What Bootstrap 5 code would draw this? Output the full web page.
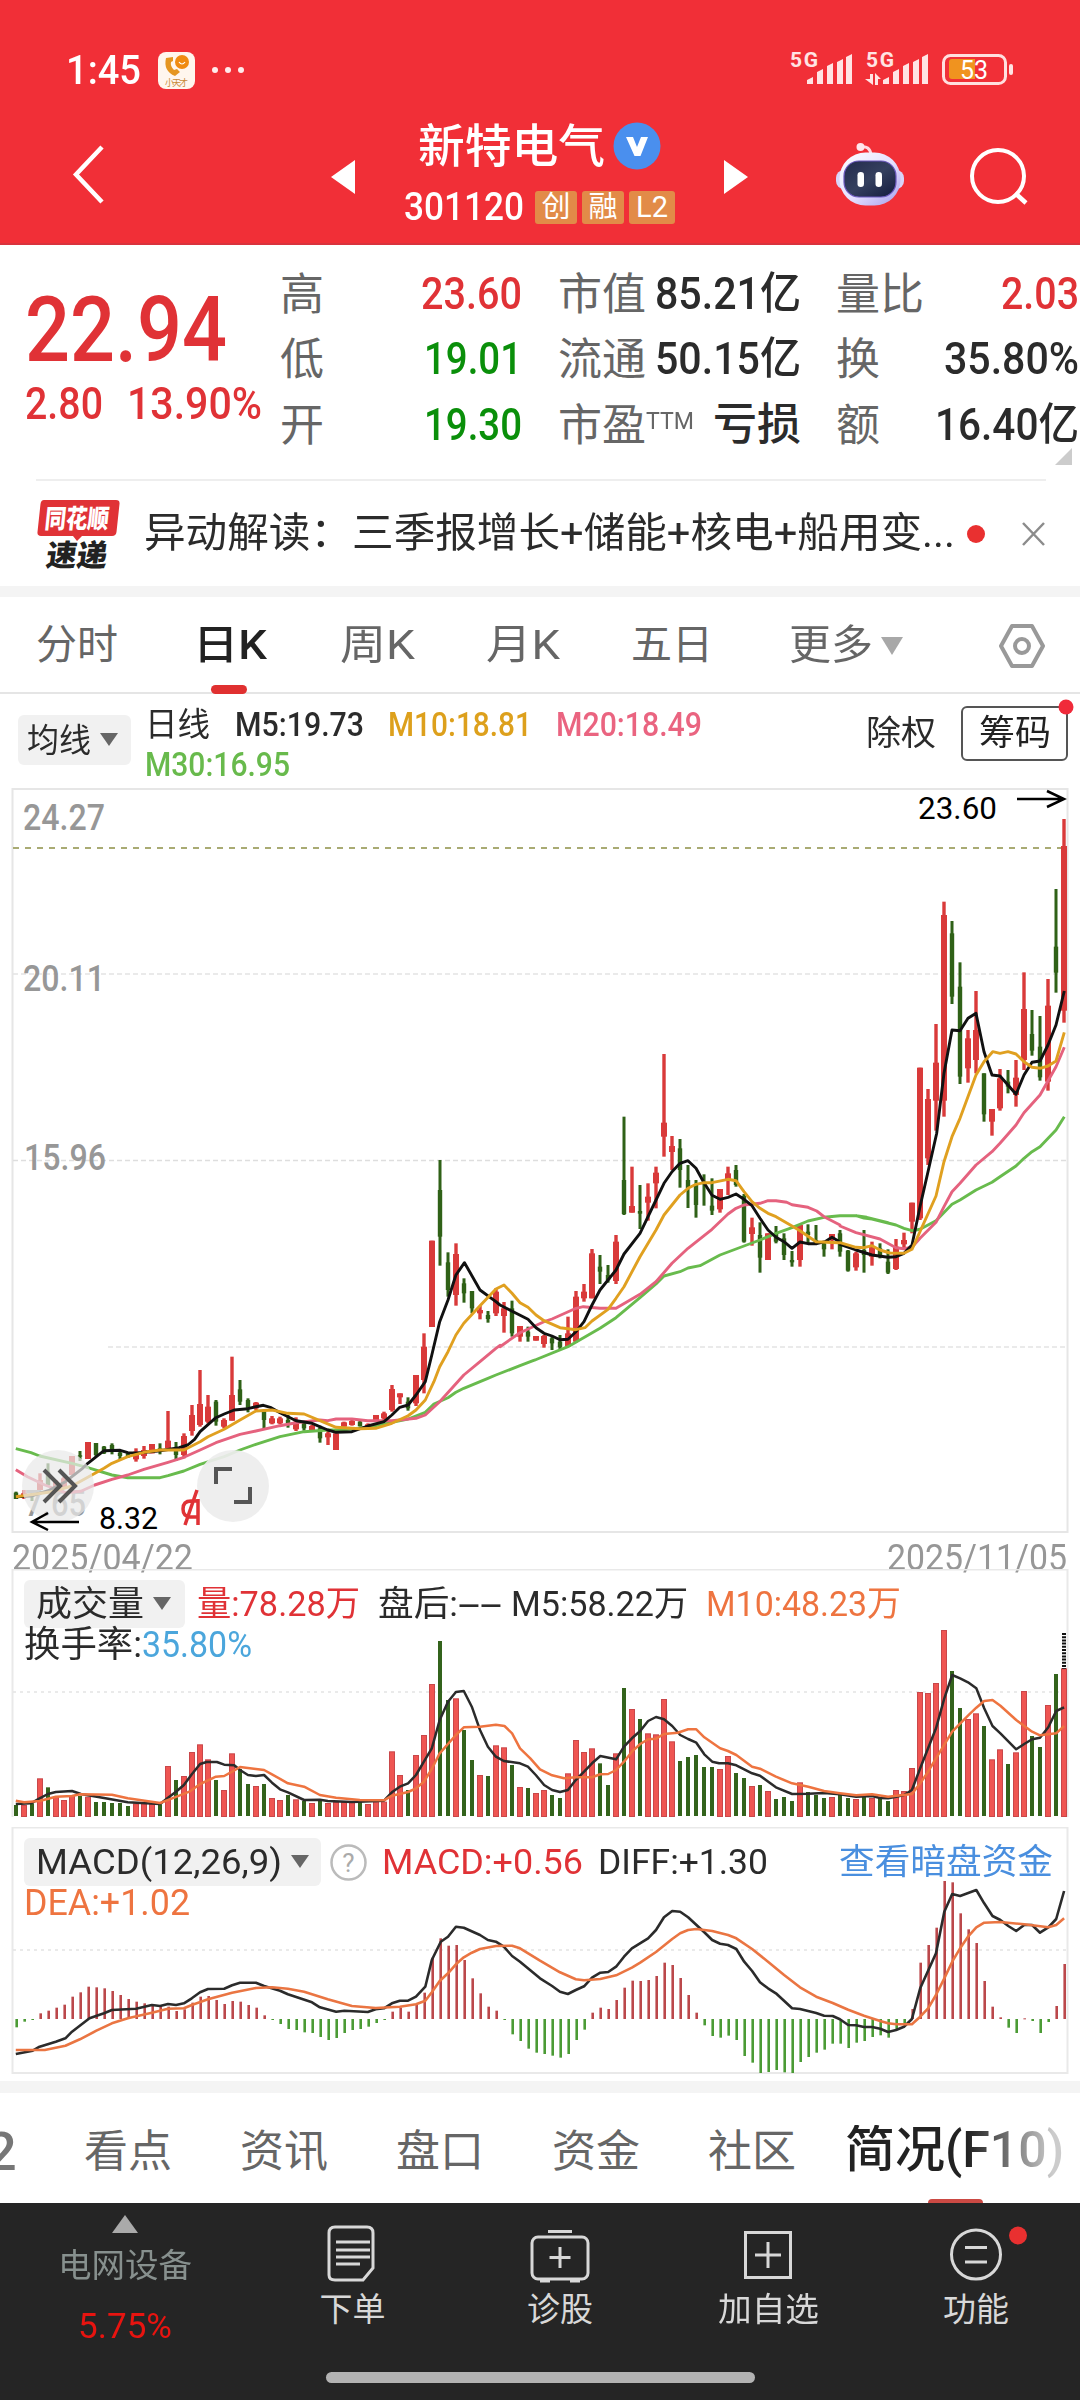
<!DOCTYPE html>
<html lang="zh-CN">
<head>
<meta charset="utf-8">
<meta name="viewport" content="width=device-width, initial-scale=1">
<title>新特电气 301120</title>
<link href="https://cdn.jsdelivr.net/npm/bootstrap@5.3.0/dist/css/bootstrap.min.css" rel="stylesheet">
<style>
body{width:1080px;height:2400px;overflow:hidden;background:#fff;color:#2b2b2b;font-family:Roboto,"Noto Sans CJK SC",sans-serif;line-height:1}
svg{display:block}
svg text{font-family:Roboto,"Noto Sans CJK SC",sans-serif}
.fit{display:inline-block;white-space:nowrap;text-align:left}
.fit>span{display:inline-block;transform-origin:0 50%}
.up{color:#e03236}.down{color:#0a8f0a}.soft{color:#666}.org{color:#ee7440}
.num{font-weight:500}
/* header */
.top-area{height:245px;background:#f12f37;color:#fff;border-bottom:2px solid #d9333d}
.status-row{height:106px;padding:34px 64px 0 66px}
.status-row .clock{font-size:41px;font-weight:500}
.title-row{height:137px}
.title-row .back{margin-left:70px}
.prev{margin-left:196px}
.title-mid{width:290px}
.stock-name{font-size:46px;font-weight:500;margin-left:-2px}
.stock-code{font-size:39px;font-weight:500}
.code-row{margin-top:18px}
.stock-tag{height:33px;background:#e28b48;border-radius:3px;font-size:29px;width:42px;margin-left:5px}
.tag-first{margin-left:11px}
.tag-l2{width:46px}
/* quote */
.quote{height:234px;padding-left:25px}
.quote-main{width:255px;padding-top:40px}
.big{font-size:91px;font-weight:500}
.sub{font-size:44px;font-weight:500;margin-top:6px}
.qrow{height:65.5px}
.qcols{padding-top:17px;font-size:44px}
.qa{width:242px}.qb{width:243px;margin-left:36px}.qc{width:243px;margin-left:35px}
.qcols .num{margin-top:-2px}
.fold{right:8px;bottom:14px}
/* news */
.news{height:107px;margin:0 34px 0 36px;border-top:2px solid #eee}
.news-text{font-size:41px;margin-left:24px}
.news-dot{margin-left:12px}
.band{background:#f4f4f4}
.band-a{height:11px}.band-b{height:12px}
.reddot{width:18px;height:18px;border-radius:50%;background:#e93030}
/* periods */
.periods{height:97px;padding:2px 0 0 36px;border-bottom:2px solid #e5e5e5;display:grid;grid-template-columns:157px 147px 146px 145px 158px 210px auto;font-size:41px;color:#666;align-items:center}
.periods .now{color:#222;font-weight:500;position:relative}
.periods .now::after{content:"";position:absolute;left:18px;top:60px;width:36px;height:9px;border-radius:5px;background:#e03030}
.averages{height:94px;padding:0 12px 0 18px}
.chip{background:#f1f1f1;border-radius:6px}
.avg-chip{width:113px;height:50px;padding-left:9px;font-size:33px;margin-top:21px}
.avg-list{width:560px;margin-left:14px;font-size:33px;padding-top:10px}
.avg-list div{height:40px}
.gap-m{margin-left:25px}
.m10{color:#dda01c}.m20{color:#ea6480}.m30{color:#68ba4c}
.chips-btn{width:107px;height:55px;border:2px solid #555;border-radius:6px;font-size:35px;color:#222}
.adj{font-size:34px;margin-right:25px}
.btn-dot{right:-6px;top:5px}
.price-panel{height:746px}
.dates{height:35px;padding:6px 13px 0 12px;font-size:36px;color:#979797}
.vol-panel{height:258px}
.macd-panel{height:254px}
.panel-head{padding:11px 27px 0 24px;position:relative;font-size:35px}
.panel-head .chip{height:48px;padding-left:12px}
.chip-vol{width:161px}.chip-macd{width:297px}
.line2{position:relative;padding-left:24px;font-size:36px;margin-top:-1px}
.link-blue{color:#4a8fdf}
.sky{color:#4ba6dc}
.g9{margin-left:9px}.g12{margin-left:12px}.g15{margin-left:15px}.g18{margin-left:18px}
/* lower tabs */
.lower{height:110px;font-size:44px;color:#666;display:grid;grid-template-columns:84px 156px 156px 156px 156px 137px auto;align-items:center;padding-top:8px}
.lower .now{font-size:50px;font-weight:500;padding-bottom:4px;background:linear-gradient(90deg,#222 0,#222 56%,#ccc 95%);-webkit-background-clip:text;background-clip:text;color:transparent}
.lower-line{width:55px;height:4px;background:#cc4a44;border-radius:4px 4px 0 0;left:928px;bottom:0}
.dock{height:197px;background:#252525;color:#d8d8d8;font-size:33px}
.dock-cols{height:150px;display:grid;grid-template-columns:249px 207px 208px 208px 208px}
.dock-item{padding-top:20px}
.dock-item .fit{margin-top:8px}
.sector{color:#87908e;margin-top:12px}
.sector-chg{color:#e81410;margin-top:27px;font-size:35px}
.home-bar{width:429px;height:11px;border-radius:6px;background:#b3b3b3;margin-left:326px;margin-top:19px}
</style>
<script src="https://cdn.jsdelivr.net/npm/bootstrap@5.3.0/dist/js/bootstrap.bundle.min.js"></script>
</head>
<body>
<header class="top-area">
  <div class="status-row d-flex align-items-start">
    <span class="clock mt-3 fit" data-w="75">1:45</span>
    <svg class="ms-3 mt-3" width="96" height="42" viewBox="0 0 96 42"><rect x="1" y="2" width="37" height="37" rx="8" fill="#fff6ee"/><path d="M9 8q-3 13 9 18l5-4-3-3-3 1q-4-4-3-8l2-1v-4z" fill="#e59520"/><circle cx="25" cy="12" r="7" fill="#f08b12"/><path d="M22 12q3 4 6 0" fill="none" stroke="#fff" stroke-width="1.2"/><text x="8" y="36" font-size="9" textLength="23" fill="#c88a3a">小天才</text><g fill="#ffecec"><circle cx="58" cy="20" r="3"/><circle cx="71" cy="20" r="3"/><circle cx="84" cy="20" r="3"/></g></svg>
    <svg class="ms-auto" width="228" height="56" viewBox="788 34 228 56"><g fill="#ffe4e4"><text x="790" y="67" font-size="21" font-weight="700" textLength="28">5G</text><text x="866" y="67" font-size="21" font-weight="700" textLength="28">5G</text>
      <path d="M807 84v-4l6-3v7zM817 84v-12l6-3v15zM827 84v-18l6-3v21zM837 84v-22l6-3v25zM846 84v-27l6-3v30z"/><path d="M883 84v-4l6-3v7zM893 84v-12l6-3v15zM903 84v-18l6-3v21zM913 84v-22l6-3v25zM922 84v-27l6-3v30z"/><path d="M870 74h3v11l-8-6h5zM875 85V73l6 6h-3v6z"/><rect x="1009" y="64" width="4" height="11" rx="2"/></g>
      <rect x="943.500" y="55.500" width="62" height="28" rx="7" fill="none" stroke="#ffe0df" stroke-width="3"/><path d="M952 59h23v20h-23q-3 0-3-3V62q0-3 3-3z" fill="#f0931f"/><text x="960" y="79" font-size="25" textLength="28" fill="#fff">53</text></svg>
  </div>
  <div class="title-row d-flex">
    <svg class="back" width="40" height="137" viewBox="70 106 40 137"><path d="M102 147 76 174.500 102 202" fill="none" stroke="#fff" stroke-width="4.500"/></svg>
    <svg class="prev" width="50" height="137" viewBox="110 106 50 137"><path d="M159 160v34l-24-17z" fill="#fff"/></svg>
    <div class="title-mid ms-5">
      <div class="d-flex align-items-center pt-3 ps-3"><span class="stock-name fit" data-w="187">新特电气</span><svg class="ms-2" width="48" height="48" viewBox="0 0 48 48"><circle cx="24" cy="24" r="23.500" fill="#4a8fee"/><path d="M13 15h7l4 10 4-10h7L27.500 34h-6z" fill="#fff"/></svg></div>
      <div class="code-row d-flex align-items-center"><span class="stock-code fit" data-w="120">301120</span><span class="stock-tag tag-first d-flex justify-content-center align-items-center">创</span><span class="stock-tag d-flex justify-content-center align-items-center">融</span><span class="stock-tag tag-l2 d-flex justify-content-center align-items-center">L2</span></div>
    </div>
    <svg class="ms-auto" width="356" height="137" viewBox="724 106 356 137">
      <defs><linearGradient id="rb" x1="0" y1="0" x2="1" y2="1"><stop offset="0" stop-color="#fff"/><stop offset=".55" stop-color="#e4dfff"/><stop offset="1" stop-color="#a39bea"/></linearGradient><linearGradient id="fc" x1="0" y1="0" x2="1" y2="1"><stop offset="0" stop-color="#232a4c"/><stop offset=".5" stop-color="#35405f"/><stop offset="1" stop-color="#131a3d"/></linearGradient></defs>
      <path d="M724 160v34l24-17z" fill="#fff"/>
      <path d="M860 147q10-2 11 8" fill="none" stroke="#ffd9e3" stroke-width="3"/><circle cx="860.500" cy="147" r="4" fill="#ffe6ec"/>
      <rect x="836" y="170" width="68" height="19" rx="8" fill="#d9d4f8"/><rect x="839.500" y="152.500" width="61" height="53" rx="26" fill="url(#rb)"/><rect x="844" y="161" width="52" height="36" rx="15" fill="url(#fc)" stroke="#6a57bd" stroke-width="1.200"/><rect x="857.500" y="172" width="6.500" height="15" rx="3.200" fill="#fff"/><rect x="875.500" y="172" width="6.500" height="15" rx="3.200" fill="#fff"/>
      <circle cx="998" cy="176" r="26" fill="none" stroke="#fff" stroke-width="4"/><path d="m1015 193 11 10" stroke="#fff" stroke-width="4.500"/>
    </svg>
  </div>
</header>

<section class="quote d-flex position-relative">
  <div class="quote-main up"><div class="big"><span class="fit" data-w="202">22.94</span></div><div class="sub"><span class="fit" data-w="78">2.80</span><span class="fit ms-4" data-w="135">13.90%</span></div></div>
  <div class="qcols d-flex">
    <div class="qa">
      <div class="qrow d-flex align-items-center justify-content-between"><span class="soft">高</span><span class="num up fit" data-w="101">23.60</span></div>
      <div class="qrow d-flex align-items-center justify-content-between"><span class="soft">低</span><span class="num down fit" data-w="98">19.01</span></div>
      <div class="qrow d-flex align-items-center justify-content-between"><span class="soft">开</span><span class="num down fit" data-w="98">19.30</span></div>
    </div>
    <div class="qb">
      <div class="qrow d-flex align-items-center justify-content-between"><span class="soft">市值</span><span class="num fit" data-w="146">85.21亿</span></div>
      <div class="qrow d-flex align-items-center justify-content-between"><span class="soft">流通</span><span class="num fit" data-w="146">50.15亿</span></div>
      <div class="qrow d-flex align-items-center justify-content-between"><span class="soft">市盈<sup class="fs-4"><span class="fit" data-w="48">TTM</span></sup></span><span class="num fit" data-w="88">亏损</span></div>
    </div>
    <div class="qc">
      <div class="qrow d-flex align-items-center justify-content-between"><span class="soft">量比</span><span class="num up fit" data-w="78">2.03</span></div>
      <div class="qrow d-flex align-items-center justify-content-between"><span class="soft">换</span><span class="num fit" data-w="135">35.80%</span></div>
      <div class="qrow d-flex align-items-center justify-content-between"><span class="soft">额</span><span class="num fit" data-w="144">16.40亿</span></div>
    </div>
  </div>
  <svg class="position-absolute fold" width="17" height="17"><path d="M17 0v17H0z" fill="#ccc"/></svg>
</section>

<section class="news d-flex align-items-center">
  <svg width="84" height="76" viewBox="36 494 84 76"><path d="M44 498h72q4 0 3.500 4l-3 28q-.5 4-4.500 4H82l-5 5-4-5H41q-4 0-3.500-4l3-28q.5-4 3.500-4z" fill="#e03236"/><text transform="translate(44 526) skewX(-6)" font-size="26" font-weight="900" textLength="64" lengthAdjust="spacingAndGlyphs" fill="#fff">同花顺</text><text transform="translate(45 564) skewX(-8)" font-size="30" font-weight="900" textLength="61" lengthAdjust="spacingAndGlyphs" fill="#222">速递</text></svg>
  <span class="news-text fit" data-w="811">异动解读：三季报增长+储能+核电+船用变...</span>
  <span class="reddot news-dot flex-shrink-0"></span>
  <svg class="ms-auto" width="25" height="26" viewBox="0 0 25 26"><path d="m2 2 21 22M23 2 2 24" stroke="#8c8c8c" stroke-width="2.500"/></svg>
</section>
<div class="band band-a"></div>

<nav class="periods">
  <span class="fit" data-w="82">分时</span><span class="now"><span class="fit" data-w="74">日K</span></span><span class="fit" data-w="75">周K</span><span class="fit" data-w="74">月K</span><span class="fit" data-w="82">五日</span>
  <span class="d-flex align-items-center"><span class="fit" data-w="84">更多</span><svg class="ms-2" width="22" height="18"><path d="M0 0h22L11 18z" fill="#a8a8a8"/></svg></span>
  <svg width="46" height="46" viewBox="0 0 46 46"><path d="M13 3h20l11 20-11 20H13L2 23z" fill="none" stroke="#999" stroke-width="4" stroke-linejoin="round"/><circle cx="23" cy="23" r="7" fill="none" stroke="#999" stroke-width="4"/></svg>
</nav>

<section class="averages d-flex">
  <div class="avg-chip chip d-flex align-items-center"><span class="fit" data-w="64">均线</span><svg class="ms-2" width="20" height="14"><path d="M1 0h18l-9 13z" fill="#666"/></svg></div>
  <div class="avg-list">
    <div class="d-flex align-items-center"><span class="fit" data-w="65">日线</span><span class="fit num gap-m" data-w="129">M5:19.73</span><span class="fit num m10 ms-4" data-w="144">M10:18.81</span><span class="fit num m20 ms-4" data-w="146">M20:18.49</span></div>
    <div class="d-flex align-items-center"><span class="fit num m30" data-w="145">M30:16.95</span></div>
  </div>
  <div class="ms-auto d-flex align-items-center position-relative mb-3 pb-0"><span class="adj"><span class="fit" data-w="70">除权</span></span><span class="chips-btn d-flex align-items-center justify-content-center"><span class="fit" data-w="72">筹码</span></span><svg class="position-absolute btn-dot" width="16" height="16"><circle cx="8" cy="8" r="7.500" fill="#f02a3a"/></svg></div>
</section>

<section class="price-panel"><svg id="price" width="1080" height="746" viewBox="0 788 1080 746"></svg></section>
<div class="dates d-flex justify-content-between align-items-start"><span class="fit" data-w="181">2025/04/22</span><span class="fit" data-w="180">2025/11/05</span></div>

<section class="vol-panel position-relative">
  <svg id="volume" class="position-absolute top-0 start-0" width="1080" height="258" viewBox="0 1569 1080 258"></svg>
  <div class="panel-head d-flex align-items-center">
    <span class="chip chip-vol d-flex align-items-center"><span class="fit" data-w="108">成交量</span><svg class="ms-2" width="20" height="14"><path d="M1 0h18l-9 13z" fill="#666"/></svg></span>
    <span class="fit up g12" data-w="163">量:78.28万</span><span class="fit g18" data-w="80">盘后:</span><span class="fit" data-w="44">--</span><span class="fit g9" data-w="177">M5:58.22万</span><span class="fit org g18" data-w="195">M10:48.23万</span>
  </div>
  <div class="line2"><span class="fit" data-w="118">换手率:</span><span class="fit sky" data-w="110">35.80%</span></div>
</section>

<section class="macd-panel position-relative">
  <svg id="macd" class="position-absolute top-0 start-0" width="1080" height="254" viewBox="0 1827 1080 254"></svg>
  <div class="panel-head d-flex align-items-center">
    <span class="chip chip-macd d-flex align-items-center"><span class="fit" data-w="246">MACD(12,26,9)</span><svg class="ms-2" width="20" height="14"><path d="M1 0h18l-9 13z" fill="#666"/></svg></span>
    <svg class="g9" width="37" height="37" viewBox="0 0 37 37"><circle cx="18.500" cy="18.500" r="17" fill="none" stroke="#bbb" stroke-width="2.500"/><text x="18.500" y="27.500" font-size="26" text-anchor="middle" fill="#aaa">?</text></svg>
    <span class="fit up g15" data-w="201">MACD:+0.56</span><span class="fit g15" data-w="170">DIFF:+1.30</span><span class="fit link-blue ms-auto" data-w="214">查看暗盘资金</span>
  </div>
  <div class="line2 org"><span class="fit" data-w="166">DEA:+1.02</span></div>
</section>
<div class="band band-b"></div>

<nav class="lower position-relative">
  <svg width="40" height="60" viewBox="0 0 40 60"><text x="-14" y="48" font-size="54" font-weight="500" fill="#777">2</text></svg><span>看点</span><span>资讯</span><span>盘口</span><span>资金</span><span>社区</span><span><span class="now d-inline-block">简况(F10)</span></span>
  <i class="lower-line position-absolute"></i>
</nav>

<footer class="dock">
  <div class="dock-cols">
    <div class="d-flex flex-column align-items-center pt-2"><svg width="28" height="22" class="mt-1"><path d="M14 0 27 18H1z" fill="#aaa"/></svg><span class="fit sector" data-w="134">电网设备</span><span class="fit sector-chg" data-w="94">5.75%</span></div>
    <div class="dock-item d-flex flex-column align-items-center"><svg width="60" height="62" viewBox="0 0 60 62"><path d="M11 4h32q6 0 6 6v35L39 57H11q-6 0-6-5V10q0-6 6-6z" transform="translate(1)" fill="none" stroke="#d8d8d8" stroke-width="3"/><path d="M13 19h34M13 27h34M13 34h34M13 41h24" stroke="#d8d8d8" stroke-width="3"/></svg><span class="fit" data-w="66">下单</span></div>
    <div class="dock-item d-flex flex-column align-items-center"><svg width="60" height="62" viewBox="0 0 60 62"><rect x="2" y="14" width="56" height="42" rx="6" fill="none" stroke="#d8d8d8" stroke-width="3"/><path d="M18 8.500h24M30 24v21M19.500 34.500h21M10 58h10M40 58h10" stroke="#d8d8d8" stroke-width="3"/></svg><span class="fit" data-w="66">诊股</span></div>
    <div class="dock-item d-flex flex-column align-items-center"><svg width="60" height="62" viewBox="0 0 60 62"><rect x="7.500" y="9.500" width="45" height="45" fill="none" stroke="#d8d8d8" stroke-width="3"/><path d="M30 19v26M17 32h26" stroke="#d8d8d8" stroke-width="3"/></svg><span class="fit" data-w="101">加自选</span></div>
    <div class="dock-item d-flex flex-column align-items-center"><svg width="60" height="62" viewBox="0 0 60 62" overflow="visible"><circle cx="30" cy="31.500" r="24.500" fill="none" stroke="#d8d8d8" stroke-width="3"/><path d="M19 24.500h22M19 39h22" stroke="#d8d8d8" stroke-width="3"/><circle cx="72" cy="12.500" r="9" fill="#e93030"/></svg><span class="fit" data-w="66">功能</span></div>
  </div>
  <div class="home-bar"></div>
</footer>

<script>
/* squeeze each label horizontally to its column width */
document.querySelectorAll('.fit').forEach(function(e){
  var w=+e.dataset.w,s=document.createElement('span');
  s.textContent=e.textContent;e.textContent='';e.appendChild(s);
  var n=s.getBoundingClientRect().width;
  e.style.width=w+'px';s.style.transform='scaleX('+(w/n)+')';
});
var RED='#d93a3a',GREEN='#2f6117';
function X(i){return 16+8*i}
function rect(x,y,w,h,f,o){return '<rect x="'+x+'" y="'+y+'" width="'+w+'" height="'+Math.max(h,1)+'" fill="'+f+'"'+(o||'')+'/>'}
function hline(y,c,d,w){return '<path d="M13 '+y+'H1067" stroke="'+c+'" stroke-width="'+(w||1.5)+'" stroke-dasharray="'+d+'"/>'}
/* segs: [originX, originY, scaleX, "x,y x,y ..."] */
function curve(c,w,segs){
  var p=[];segs.forEach(function(s){s[3].trim().split(/\s+/).forEach(function(q){q=q.split(',');p.push((s[0]+q[0]/s[2]).toFixed(1)+','+(s[1]+q[1]/3).toFixed(1))})});
  return '<polyline points="'+p.join(' ')+'" fill="none" stroke="'+c+'" stroke-width="'+w+'" stroke-linejoin="round"/>';
}
function label(x,y,s,w,size,c,b){return '<text x="'+x+'" y="'+y+'" font-size="'+size+'" font-weight="'+(b||400)+'" textLength="'+w+'" lengthAdjust="spacingAndGlyphs" fill="'+c+'">'+s+'</text>'}
var K=2.904;
/* colour, high, body top, body bottom, low */
var A='g1175 1178 1197 1197|r1170 1180 1192 1197|g1180 1183 1190 1203|r1120 1140 1170 1170|g1090 1115 1155 1160|r1140 1145 1165 1168|r1130 1135 1160 1165|r1068 1068 1125 1125|g1053 1066 1070 1083|r1026 1026 1077 1077|g1029 1029 1065 1070|g1038 1040 1060 1062|g1030 1035 1055 1063|g1055 1058 1068 1080|g1058 1060 1070 1074|r1045 1055 1078 1085|r1038 1050 1068 1076|r1032 1032 1060 1060|g1030 1045 1052 1063|r933 1022 1045 1045|g1026 1045 1065 1083|r1000 1008 1065 1075|r915 945 993 1007|r810 912 975 980|r885 920 965 970|g900 905 965 977|r955 960 980 985|r770 885 962 962|g840 868 905 915|g895 900 925 937|r906 908 925 930|g930 935 960 987|r948 955 970 973|r950 955 970 973|g945 960 970 983|r952 965 988 993|g962 970 985 992|r975 978 990 992|g977 985 1015 1028|r990 1000 1012 1035|r1000 1000 1050 1050|r965 967 980 980|r960 963 975 977|g962 965 978 980|r970 973 982 982|r945 945 963 963|r935 940 955 960|r855 867 930 935|r880 880 892 912|g892 905 925 932|r825 825 910 918|r700 740 840 880|r422 422 681 681|g180 270 410 497|g457 487 570 590|r430 462 585 617|g535 550 580 608|g573 573 625 640|r618 630 640 658|g633 645 657 668|r565 575 640 648|r606 625 648 698';
var B='g1022 1045 1120 1130|r1098 1098 1130 1145|g1100 1115 1130 1145|r1128 1128 1142 1142|r1125 1128 1152 1163|g1130 1135 1150 1170|g1125 1145 1162 1168|r1070 1120 1160 1160|r993 1010 1145 1148|r972 995 1015 1025|r867 880 1015 1015|g885 920 935 972|g915 945 960 968|r825 845 963 972|g470 660 762 765|r620 738 758 758|g675 753 761 807|r670 710 728 782|r620 638 670 745|r282 488 530 590|r528 558 576 630|g537 565 630 683|g615 660 685 744|g660 675 735 773|g643 665 673 737|g655 737 752 765|r687 687 748 758|r620 640 662 705|g615 630 675 680|g702 708 845 848|r773 802 822 857|g787 825 893 938|r820 820 900 900|g798 820 845 850|g820 835 885 900|g873 900 907 920|r795 795 900 920|g793 815 825 850|g795 840 848 850|g845 850 868 890|r822 822 838 868|g810 820 875 890|g870 872 932 935|r875 880 922 932|g810 870 885 938|r845 860 890 917|g850 865 890 895|g868 905 938 942';
var C='r1377 1400 1467 1470|r1358 1380 1393 1410|r1268 1268 1325 1360|r863 863 1315 1320|r927 957 1135 1155|r732 848 962 1052|r365 405 962 1010|g423 460 650 672|g547 620 890 912|r750 775 865 908|r633 750 840 880|g880 880 1003 1025|r987 987 1025 1067|r867 895 985 992|g870 905 920 940|r840 893 945 980|r577 687 840 870|g690 762 812 827|g708 800 892 902|r597 677 905 932|g327 500 578 638|r117 198 692 728';
var candles=[];
[[A,1100],[B,960],[C,780]].forEach(function(s){s[0].split('|').forEach(function(q){var v=q.slice(1).split(' ').map(function(n){return s[1]+n/3});v.unshift(q[0]);candles.push(v)})});
var h='<rect x="12.500" y="789" width="1055" height="743" fill="none" stroke="#e6e6e6" stroke-width="2"/>'+hline(974,'#e3e3e3','5 3')+hline(1160.5,'#dedede','5 3')+'<path d="M108 1347H1067" stroke="#e3e3e3" stroke-width="1.5" stroke-dasharray="5 3"/>'+hline(848,'#a9ab73','6 6',2);
h+=label(23,830,'24.27',82,37,'#979797',500)+label(23,991,'20.11',82,37,'#979797',500)+label(24,1170,'15.96',82,37,'#979797',500)+label(25,1516,'7.65',61,37,'#979797',500);
candles.forEach(function(c,i){var r=c[0]=='r',f=r?RED:GREEN,x=X(i),bw=r?6:4.4,ww=r?3.4:3;h+=rect(x-ww/2,c[1],ww,c[4]-c[1],f)+rect(x-bw/2,c[2],bw,c[3]-c[2],f)});
h+=curve('#68bb4d',2.9,[[0,1100,K,'46,1046 90,1058 115,1068 209,1090 255,1103 325,1125 371,1133 465,1133 488,1127 534,1113 581,1093 651,1070 697,1050 743,1033 813,1010 883,995 952,990 1000,989 1068,982 1138,967 1185,957 1235,937 1260,912 1301,893 1324,877 1347,865 1417,835 1440,825 1510,797 1550,781'],[500,960,3,'105,1200 204,1160 300,1105 348,1073 420,1013 468,972 492,948 540,935 564,924 600,917 660,885 708,867 780,840 828,820 876,803 924,783 972,772 1020,767 1068,767 1100,772 1164,788'],[840,780,3,'48,1307 72,1314 96,1317 168,1335 192,1345 216,1352 240,1348 288,1322 336,1273 360,1260 408,1230 456,1207 480,1190 528,1158 552,1135 576,1115 600,1100 648,1050 673,1010']]);
h+=curve('#e5627e',2.9,[[0,1100,K,'46,1109 80,1130 130,1155 190,1178 235,1174 275,1155 325,1138 371,1125 418,1108 488,1087 534,1072 581,1050 627,1028 697,1003 743,993 813,977 860,968 929,960 952,962 976,957 1022,957 1068,962 1138,962 1208,955 1235,945 1277,905 1347,825 1394,785 1440,745 1452,736'],[500,960,3,'0,1160 60,1118 132,1085 156,1077 228,1045 250,1040 300,1045 348,1045 420,1003 468,965 516,910 564,865 636,808 684,762 708,745 732,735 780,730 804,722 828,722 860,727 876,734 924,742 950,753 972,770 1020,795'],[840,780,3,'0,1338 48,1358 120,1377 168,1403 192,1406 216,1402 240,1375 288,1327 312,1280 336,1235 360,1210 408,1155 456,1115 480,1090 528,1035 552,998 600,945 648,860 673,802']]);
h+=curve('#111',2.9,[[0,1100,K,'46,1190 90,1188 140,1172 190,1145 240,1105 255,1090 302,1052 349,1051 371,1058 400,1059 465,1052 520,1043 545,1035 565,1018 581,995 627,953 651,942 680,930 720,926 743,920 765,916 785,922 813,938 860,962 906,970 952,990 976,997 1022,995 1068,978 1115,965 1138,945 1161,922 1185,915 1208,885 1235,845 1254,765 1277,665 1301,600 1324,525 1349,488 1394,570 1440,605'],[500,960,3,'0,1035 84,1078 108,1103 132,1120 156,1128 180,1139 204,1138 228,1115 252,1085 276,1035 300,990 324,960 348,930 372,882 420,820 468,720 492,670 516,635 540,610 564,602 588,625 612,668 636,706 660,718 684,712 708,702 732,718 756,737 780,775 804,810 828,832 852,845 876,865 900,846 924,851 950,851 975,845 996,832 1015,843'],[840,780,3,'0,1393 48,1410 96,1425 144,1432 168,1430 192,1420 216,1395 240,1280 264,1175 290,1060 312,880 336,750 360,752 384,715 408,700 432,815 456,885 480,888 504,915 528,943 552,885 576,847 600,843 624,795 648,735 673,633']]);
h+=curve('#e0a020',2.9,[[0,1100,K,'46,1190 100,1183 150,1175 209,1158 255,1132 302,1105 325,1090 371,1070 418,1057 465,1050 534,1050 581,1025 604,1010 651,988 697,960 743,933 790,930 836,940 883,942 929,962 976,982 1045,986 1091,985 1138,970 1185,947 1208,930 1235,900 1260,845 1277,800 1301,755 1324,705 1347,670 1394,617 1440,567'],[500,960,3,'12,975 36,1000 60,1028 84,1042 108,1065 132,1082 180,1103 228,1109 255,1103 276,1083 324,1048 348,1015 372,980 420,890 468,810 492,765 540,705 564,685 588,673 612,668 636,668 684,658 708,662 732,695 756,725 780,745 804,760 828,770 876,798 900,812 948,845 1015,848'],[840,780,3,'0,1388 48,1402 72,1403 96,1397 120,1410 150,1419 192,1420 216,1408 240,1355 288,1248 312,1145 336,1070 360,1015 408,885 432,845 458,815 480,820 504,815 528,822 552,845 576,862 600,865 624,858 648,843 673,757']]);
h+=label(918,819,'23.60',79,32,'#000')+'<path d="M1017 799h46M1047 791l17 8-17 8" fill="none" stroke="#000" stroke-width="2.5"/>';
h+='<circle cx="58" cy="1486" r="36" fill="#e9e9e9" fill-opacity=".72"/><path d="m44 1470 16 16-16 16M59 1470l16 16-16 16" fill="none" stroke="#555" stroke-width="4"/>';
h+='<circle cx="233" cy="1486" r="36" fill="#ededed" fill-opacity=".93"/><path d="M216 1484v-15h16M250 1487v15h-16" fill="none" stroke="#555" stroke-width="4"/>';
h+=label(99,1529,'8.32',59,31,'#000')+'<path d="M79 1522H33M48 1513l-16 9 16 8" fill="none" stroke="#000" stroke-width="2.500"/>';
h+='<path d="M198 1499v26M198 1501h-7q-8 0-8 8t8 8h7M185 1525l12-35" fill="none" stroke="#e03236" stroke-width="3.500"/>';
document.getElementById('price').innerHTML=h;

var vol='555 555 550 475 502 530 540 525 528 530 546 546 549 549 558 550 550 550 553 438 480 468 396 373 418 480 510 400 447 492 498 492 534 540 525 538 543 549 537 549 546 546 546 543 552 545 545 394 465 510 405 345 192 63 240 235 330 420 465 468 376 382 435 501 504 519 510 525 534 460 360 396 385 430 495 400 204 267 297 340 343 237 364 423 411 405 441 441 447 408 459 474 498 495 513 537 531 543 487 516 525 534 531 525 534 537 531 534 534 543 510 513 444 216 219 189 30 153 264 297 280 318 418 388 432 397 213 348 381 255 162 145'.split(' ');
h='<path d="M12.500 1817V1569.500H1067.500V1817" fill="none" stroke="#e9e9e9" stroke-width="2"/>'+hline(1692,'#e3e3e3','3 4');
vol.forEach(function(v,i){var y=1620+v/3,r=candles[i][0]=='r',x=X(i);h+=r?'<rect x="'+(x-2.5)+'" y="'+(y+.5)+'" width="5" height="'+(1816-y)+'" fill="#ef5552" stroke="#c9474a"/>':rect(x-2,y,4,1816-y,'#33631c')});
h+='<path d="M1064 1633v36" stroke="#111" stroke-width="4" stroke-dasharray="2 1.2"/>';
h+=curve('#2b2b2b',2.5,[[0,1620,K,'46,552 90,550 115,535 139,522 162,516 209,513 235,522 302,534 371,547 465,552 488,533 511,515 534,495 557,463 581,432 600,426 630,426 651,434 680,436 697,450 720,465 743,468 767,465 790,488 813,508 836,517 883,540 929,539 952,543 1022,546 1115,542 1138,517 1161,500 1185,490 1208,465 1231,425 1254,385 1277,300 1301,245 1324,216 1347,213 1370,260 1394,330 1417,380 1440,410 1463,423 1510,430 1533,440 1556,465'],[540,1620,K,'0,480 12,495 35,510 58,516 81,510 104,480 128,455 151,430 175,408 221,418 244,380 267,355 291,333 314,303 337,291 360,298 384,318 407,345 430,357 454,368 477,403 500,425 520,430 546,430 570,436 616,460 639,467 685,502 732,522 779,521 825,519 871,523 918,530 964,528 988,534 1011,535 1034,530 1057,525 1080,510 1104,445 1127,385 1150,325 1174,235 1197,165 1220,175 1243,187 1267,205 1290,265 1314,318 1337,340 1383,388 1406,372 1429,358 1452,353 1476,322 1499,273 1522,262']]);
h+=curve('#ee7440',2.5,[[0,1620,K,'46,542 70,547 115,543 162,530 209,528 232,523 325,524 371,535 465,549 500,535 550,515 581,492 627,470 651,468 674,455 697,441 743,447 767,450 790,463 836,490 883,500 929,525 976,533 1045,540 1115,541 1138,527 1185,516 1208,505 1231,485 1254,447 1277,400 1324,345 1347,322 1394,320 1440,314 1465,318 1487,340 1510,385 1540,415'],[540,1620,K,'0,448 35,466 70,475 104,472 151,472 175,463 198,462 221,450 244,425 267,395 291,372 314,358 337,356 360,342 400,338 430,328 454,328 477,352 523,385 546,393 570,405 616,440 639,446 685,470 732,490 779,500 825,513 871,520 918,526 964,523 1011,530 1080,522 1104,490 1127,455 1150,415 1197,335 1243,287 1267,263 1290,243 1314,240 1337,257 1383,300 1429,335 1452,346 1499,340 1522,318']]);
document.getElementById('volume').innerHTML=h;

var bars='1222 1205 1199 1180 1172 1163 1154 1130 1117 1100 1102 1105 1113 1125 1137 1145 1150 1153 1158 1160 1173 1168 1148 1130 1128 1140 1152 1143 1145 1155 1163 1186 1199 1212 1227 1230 1237 1239 1251 1260 1254 1239 1230 1227 1220 1209 1200 1175 1163 1175 1152 1118 1013 955 977 975 1020 1075 1120 1160 1172 1199 1243 1263 1286 1298 1302 1307 1313 1302 1260 1229 1178 1163 1167 1140 1103 1082 1083 1080 1068 1028 1035 1074 1125 1178 1216 1248 1253 1247 1260 1308 1328 1359 1356 1350 1357 1359 1326 1311 1298 1289 1271 1271 1284 1268 1263 1251 1246 1253 1230 1215 1167 1028 975 923 783 787 880 928 969 1083 1160 1192 1223 1239 1195 1203 1239 1206 1158 1032'.split(' ');
h='<rect x="12.500" y="1827.500" width="1055" height="245.500" fill="none" stroke="#e9e9e9" stroke-width="2"/>'+hline(1950,'#e3e3e3','3 4');
bars.forEach(function(v,i){var y=1620+v/3;h+=y<2019?rect(X(i)-.6,y,2.6,2019-y,'#bb484b'):rect(X(i)-.6,2019,2.6,y-2019,'#4b9b35')});
h+=curve('#2b2b2b',2.6,[[0,1620,K,'46,1302 95,1292 115,1280 162,1265 190,1255 209,1235 260,1195 302,1180 325,1170 395,1166 441,1155 465,1158 488,1152 511,1155 534,1150 557,1135 581,1117 604,1107 651,1106 674,1096 697,1088 743,1088 767,1098 813,1112 836,1123 906,1147 929,1162 976,1175 1000,1172 1068,1176 1091,1168 1115,1165 1138,1150 1161,1142 1185,1142 1208,1130 1235,1100 1254,1020 1280,965 1301,950 1324,920 1347,923 1394,945 1417,960 1440,965 1463,980 1487,1008 1510,1025'],[540,1620,K,'0,1075 35,1098 58,1115 81,1122 104,1110 128,1099 151,1073 175,1058 198,1056 221,1040 244,1010 267,985 314,955 337,930 360,892 384,873 407,875 430,892 477,937 500,960 523,971 546,975 570,987 593,1025 616,1053 639,1087 662,1105 685,1120 732,1165 755,1167 802,1179 825,1187 850,1188 871,1198 895,1215 918,1216 941,1221 964,1221 988,1226 1011,1236 1034,1230 1057,1220 1080,1197 1104,1105 1150,1000 1174,875 1197,822 1220,828 1267,810 1290,850 1314,888 1337,900 1360,918 1383,933 1406,915 1429,915 1452,938 1476,922 1499,897 1522,813']]);
h+=curve('#ea7542',2.6,[[0,1620,K,'46,1290 130,1290 190,1277 232,1258 280,1232 325,1210 371,1195 441,1178 488,1166 534,1165 557,1155 604,1138 674,1118 743,1104 790,1102 836,1106 883,1115 952,1138 1022,1158 1091,1164 1161,1160 1208,1153 1235,1142 1254,1117 1277,1083 1301,1060 1324,1033 1347,1012 1370,998 1394,987 1440,978 1487,977 1510,985'],[540,1620,K,'0,1022 58,1057 104,1078 128,1081 175,1077 221,1066 267,1043 291,1028 337,996 384,957 407,940 430,930 454,927 500,933 546,945 570,955 616,987 662,1025 709,1065 755,1102 802,1130 850,1149 895,1169 941,1187 988,1203 1011,1210 1034,1213 1080,1213 1104,1190 1127,1165 1150,1125 1174,1075 1197,1025 1220,985 1243,950 1267,922 1290,908 1337,906 1406,913 1476,922 1499,915 1522,895']]);
document.getElementById('macd').innerHTML=h;
</script>
</body>
</html>
